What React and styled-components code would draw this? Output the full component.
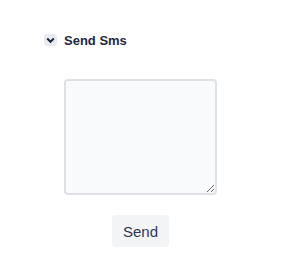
import styled, { createGlobalStyle } from 'styled-components';

const GlobalStyle = createGlobalStyle`
  body {
    margin: 0;
    background: #ffffff;
    font-family: 'Liberation Sans', Arial, sans-serif;
  }
`;

const Page = styled.div`
  padding: 32px 0 0 44px;
`;

const Header = styled.div`
  display: flex;
  align-items: center;
  gap: 7px;
  height: 16px;
`;

const Toggle = styled.span`
  width: 13px;
  height: 12px;
  border-radius: 3px;
  background: #e9ebf1;
  display: flex;
  align-items: center;
  justify-content: center;
`;

const Title = styled.h3`
  margin: 0;
  font-size: 13px;
  font-weight: 700;
  color: #1f2940;
`;

const Body = styled.div`
  display: inline-flex;
  flex-direction: column;
  align-items: center;
  gap: 20px;
  margin: 31px 0 0 20px;
`;

const Message = styled.textarea`
  box-sizing: border-box;
  width: 153px;
  height: 116px;
  border: 2px solid #e0e1e7;
  border-radius: 4px;
  background: #f9fafc;
  outline: none;
  display: block;
`;

const SendButton = styled.button`
  width: 57px;
  height: 32px;
  border: none;
  border-radius: 4px;
  background: #f3f4f6;
  color: #2f3a55;
  font-family: 'Liberation Sans', Arial, sans-serif;
  font-size: 15px;
  cursor: pointer;
`;

export default function App() {
  return (
    <>
      <GlobalStyle />
      <Page>
        <Header>
          <Toggle>
            <svg width="9" height="7" viewBox="0 0 9 7">
              <path d="M1.2 1.5 L4.5 4.8 L7.8 1.5" fill="none" stroke="#1f2940" strokeWidth="2" />
            </svg>
          </Toggle>
          <Title>Send Sms</Title>
        </Header>
        <Body>
          <Message />
          <SendButton>Send</SendButton>
        </Body>
      </Page>
    </>
  );
}
